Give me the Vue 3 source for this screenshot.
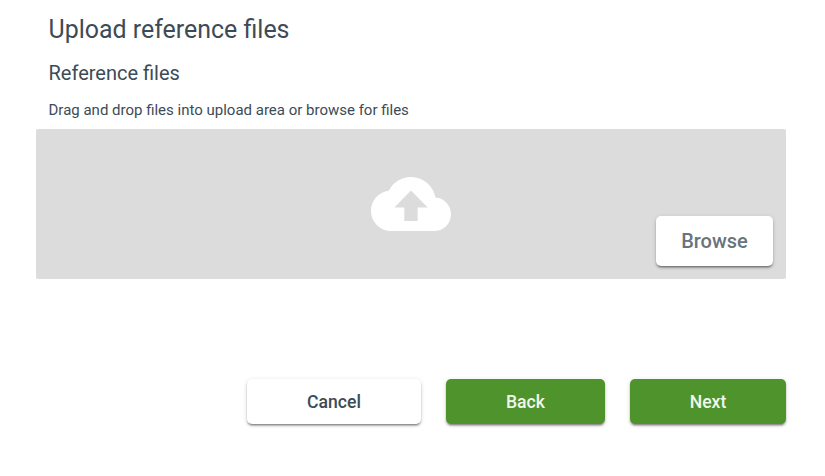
<script setup>
const actions = [
  { label: 'Cancel', kind: 'cancel' },
  { label: 'Back', kind: 'back' },
  { label: 'Next', kind: 'next' },
]
</script>

<template>
  <main class="page">
    <h1>Upload reference files</h1>
    <h2>Reference files</h2>
    <p>Drag and drop files into upload area or browse for files</p>
    <section class="dropzone">
      <svg class="cloud" viewBox="0 4 24 16" preserveAspectRatio="none" aria-hidden="true">
        <path fill="#fff" d="M19.35 10.04C18.67 6.59 15.64 4 12 4 9.11 4 6.6 5.64 5.35 8.04 2.34 8.36 0 10.91 0 14c0 3.31 2.69 6 6 6h13c2.76 0 5-2.24 5-5 0-2.64-2.05-4.78-4.65-4.96zM14 13v4h-4v-4H7l5-5 5 5h-3z" />
      </svg>
      <button class="browse">Browse</button>
    </section>
    <footer class="actions">
      <button v-for="a in actions" :key="a.label" :class="['action', a.kind]">{{ a.label }}</button>
    </footer>
  </main>
</template>

<style>
body { background: #fff; }
</style>
<style scoped>
.page {
  box-sizing: border-box;
  width: 825px;
  height: 476px;
  padding: 14px 39px 0 36px;
  font-family: Roboto, "Liberation Sans", sans-serif;
  color: #3d4b56;
}
h1, h2, p { margin: 0; padding-left: 12.5px; font-weight: 400; }
h1 { font-size: 24.95px; line-height: 32px; }
h2 { margin-top: 14px; font-size: 20px; line-height: 26px; }
p { margin-top: 14px; font-size: 15px; line-height: 20px; }
.dropzone {
  box-sizing: border-box;
  display: grid;
  grid-template-columns: 1fr 80px 1fr;
  height: 150px;
  margin-top: 9px;
  padding: 0 13px 13px;
  border-radius: 2px;
  background: #dcdcdc;
}
.cloud { grid-column: 2; width: 80px; height: 54px; margin-top: 48px; }
button {
  padding: 0;
  border: 0;
  border-radius: 5px;
  font-family: inherit;
  font-weight: 500;
  box-shadow: 0 3px 1px -2px rgba(0, 0, 0, .2), 0 2px 2px 0 rgba(0, 0, 0, .26), 0 1px 5px 0 rgba(0, 0, 0, .12);
}
.browse {
  align-self: end;
  justify-self: end;
  width: 117px;
  height: 50px;
  background: #fff;
  color: #69737c;
  font-size: 20px;
}
.actions { display: flex; justify-content: flex-end; gap: 25px; margin-top: 100px; }
.action { height: 45px; font-size: 17.6px; }
.cancel { width: 174px; background: #fff; color: #3d4b56; }
.back { width: 159px; }
.next { width: 156px; }
.back, .next { background: #4e932c; color: #f1f7ed; }
</style>
